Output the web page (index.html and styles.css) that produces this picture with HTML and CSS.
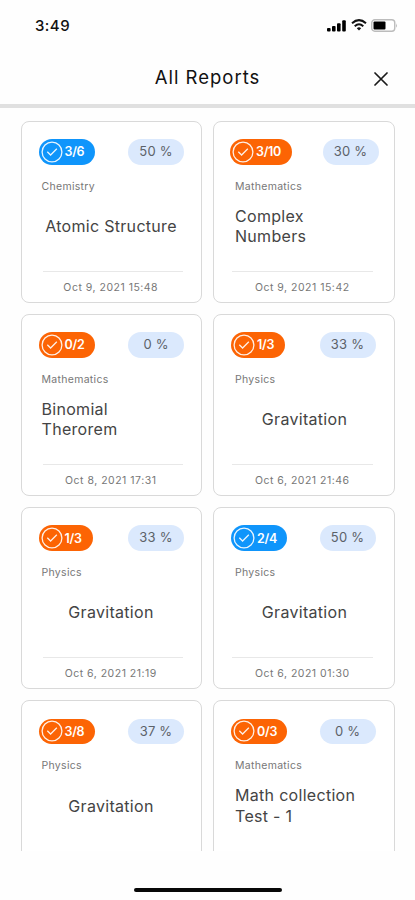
FILE: index.html
```html
<!DOCTYPE html>
<html lang="en">
<head>
<meta charset="utf-8">
<title>All Reports</title>
<link rel="stylesheet" href="styles.css">
</head>
<body>
<svg width="0" height="0" class="defs"><defs>
<symbol id="check" viewBox="0 0 22 22"><circle cx="11" cy="11" r="9.9"/><path d="M6.3 10.8l3.3 3.2 6.2-6.2"/></symbol>
</defs></svg>
<div class="screen">
  <div class="status">
    <span class="time">3:49</span>
    <div class="indicators">
      <svg class="signal" width="20" height="12" viewBox="0 0 20 12"><rect x="0" y="8" width="3.6" height="3.6" rx="1"/><rect x="5" y="6" width="3.6" height="5.6" rx="1"/><rect x="10" y="3.2" width="3.6" height="8.4" rx="1"/><rect x="15.2" y="0.2" width="3.6" height="11.4" rx="1"/></svg>
      <svg class="wifi" width="16" height="12" viewBox="0 0 16 12"><path d="M1 4.3Q8-2 15 4.3M3.7 7.2Q8 3.4 12.3 7.2"/><path class="dot" d="M5.8 9.2Q8 7.5 10.2 9.2L8 11.5Z"/></svg>
      <svg class="battery" width="27" height="13" viewBox="0 0 27 13"><rect class="shell" x=".75" y=".75" width="23" height="11.5" rx="3"/><rect x="2.5" y="2.5" width="12" height="8" rx="1"/><path class="cap" d="M25 4.2Q26.8 6.5 25 8.8Z"/></svg>
    </div>
  </div>
  <header class="header">
    <h1>All Reports</h1>
    <svg class="close" width="14" height="14" viewBox="0 0 14 14"><path d="M1 1l12 12M13 1L1 13"/></svg>
  </header>
  <main class="grid">
    <article class="card">
      <div class="top"><span class="score good"><svg><use href="#check"/></svg>3/6</span><span class="percent">50 %</span></div>
      <div class="subject">Chemistry</div><h2>Atomic Structure</h2><time>Oct 9, 2021 15:48</time>
    </article>
    <article class="card right first">
      <div class="top"><span class="score"><svg><use href="#check"/></svg>3/10</span><span class="percent">30 %</span></div>
      <div class="subject">Mathematics</div><h2 class="long">Complex<br>Numbers</h2><time>Oct 9, 2021 15:42</time>
    </article>
    <article class="card">
      <div class="top"><span class="score"><svg><use href="#check"/></svg>0/2</span><span class="percent">0 %</span></div>
      <div class="subject">Mathematics</div><h2 class="long">Binomial<br>Therorem</h2><time>Oct 8, 2021 17:31</time>
    </article>
    <article class="card right">
      <div class="top"><span class="score narrow"><svg><use href="#check"/></svg>1/3</span><span class="percent">33 %</span></div>
      <div class="subject">Physics</div><h2>Gravitation</h2><time>Oct 6, 2021 21:46</time>
    </article>
    <article class="card">
      <div class="top"><span class="score narrow"><svg><use href="#check"/></svg>1/3</span><span class="percent">33 %</span></div>
      <div class="subject">Physics</div><h2>Gravitation</h2><time>Oct 6, 2021 21:19</time>
    </article>
    <article class="card right">
      <div class="top"><span class="score good"><svg><use href="#check"/></svg>2/4</span><span class="percent">50 %</span></div>
      <div class="subject">Physics</div><h2>Gravitation</h2><time>Oct 6, 2021 01:30</time>
    </article>
    <article class="card">
      <div class="top"><span class="score"><svg><use href="#check"/></svg>3/8</span><span class="percent">37 %</span></div>
      <div class="subject">Physics</div><h2>Gravitation</h2>
    </article>
    <article class="card right">
      <div class="top"><span class="score"><svg><use href="#check"/></svg>0/3</span><span class="percent">0 %</span></div>
      <div class="subject">Mathematics</div><h2 class="long">Math collection<br>Test - 1</h2>
    </article>
  </main>
  <footer class="footer"><div class="home"></div></footer>
</div>
</body>
</html>
```
FILE: styles.css
```css
* { box-sizing: border-box; }
body { margin: 0; background: #fefefe; font-family: Inter, "Liberation Sans", sans-serif; color: #3c3c3c; }
.defs { display: block; }
.screen { width: 415px; height: 900px; display: flex; flex-direction: column; overflow: hidden; }
.status { height: 50px; padding: 1px 17px 0 35px; display: flex; align-items: center; justify-content: space-between; flex: none; }
.time { font-size: 15px; font-weight: 500; letter-spacing: .45px; color: #111; }
.indicators { display: flex; align-items: center; }
.wifi { margin: 0 4px 1px 4px; fill: none; stroke: #111; stroke-width: 2; }
.wifi .dot { fill: #111; stroke: none; }
.battery .shell { fill: #fff; stroke: #bcbcbc; stroke-width: 1.4; }
.battery .cap { fill: #bcbcbc; }
.header { height: 58px; flex: none; border-bottom: 4px solid #e0e0e0; display: grid; grid-template-columns: 1fr auto 1fr; align-items: center; padding: 0 27px; }
h1 { grid-column: 2; margin: 0 0 1px; font-size: 18.5px; font-weight: 400; letter-spacing: 1px; color: #111; line-height: 24px; }
.close { justify-self: end; margin-top: 4px; fill: none; stroke: #1a1a1a; stroke-width: 1.7; stroke-linecap: round; }
.grid { height: 743px; flex: none; overflow: hidden; display: grid; grid-template-columns: 181.5px 181.5px; grid-auto-rows: 182px; gap: 11.2px 11px; padding: 12.5px 0 0 20.5px; align-content: start; }
.card { border: 1.5px solid #d9d9d9; border-radius: 8px; background: #fff; padding: 17.5px 17px 0; display: flex; flex-direction: column; }
.top { display: flex; justify-content: space-between; height: 25.5px; }
.score { display: flex; align-items: center; width: 56px; padding-left: 2px; gap: 2px; border-radius: 13px; background: #fc6404; color: #fff; font-size: 12.5px; font-weight: 600; letter-spacing: -.3px; }
.good { background: #0f95fb; }
.narrow { width: 54px; }
.score svg { width: 22px; height: 22px; flex: none; fill: none; stroke: #fff; stroke-width: 1.3; opacity: .9; }
.percent { width: 56px; border-radius: 13px; background: #dbe9fd; color: #5c6269; text-align: center; font-size: 13px; line-height: 25.5px; letter-spacing: .2px; }
.subject { margin: 14px 0 0 3px; font-size: 10.5px; line-height: 16px; letter-spacing: .3px; color: #777; }
h2 { margin: 0 0 0 3px; height: 76px; padding-bottom: 12.5px; display: flex; align-items: center; justify-content: center; width: 139px; font-size: 16px; line-height: 20.5px; font-weight: 400; letter-spacing: .3px; color: #444; white-space: nowrap; }
.long { justify-content: flex-start; }
time { margin: 0 1px 0 4px; border-top: 1px solid #e8e8e8; padding: 8px 4px 0 0; text-align: center; font-size: 10.5px; line-height: 16px; letter-spacing: .5px; color: #777; white-space: nowrap; }
.right .top { margin-right: 1px; }
.right .subject, .right h2 { margin-left: 4px; }
.right time { margin: 0 4px 0 1px; padding-right: 0; }
.first .top { margin: 0 -2px 0 -1px; }
.first .score { width: 62px; }
.footer { flex: 1; display: flex; justify-content: center; align-items: flex-start; padding-top: 37px; }
.home { width: 148px; height: 4px; border-radius: 2px; background: #080808; }
```
